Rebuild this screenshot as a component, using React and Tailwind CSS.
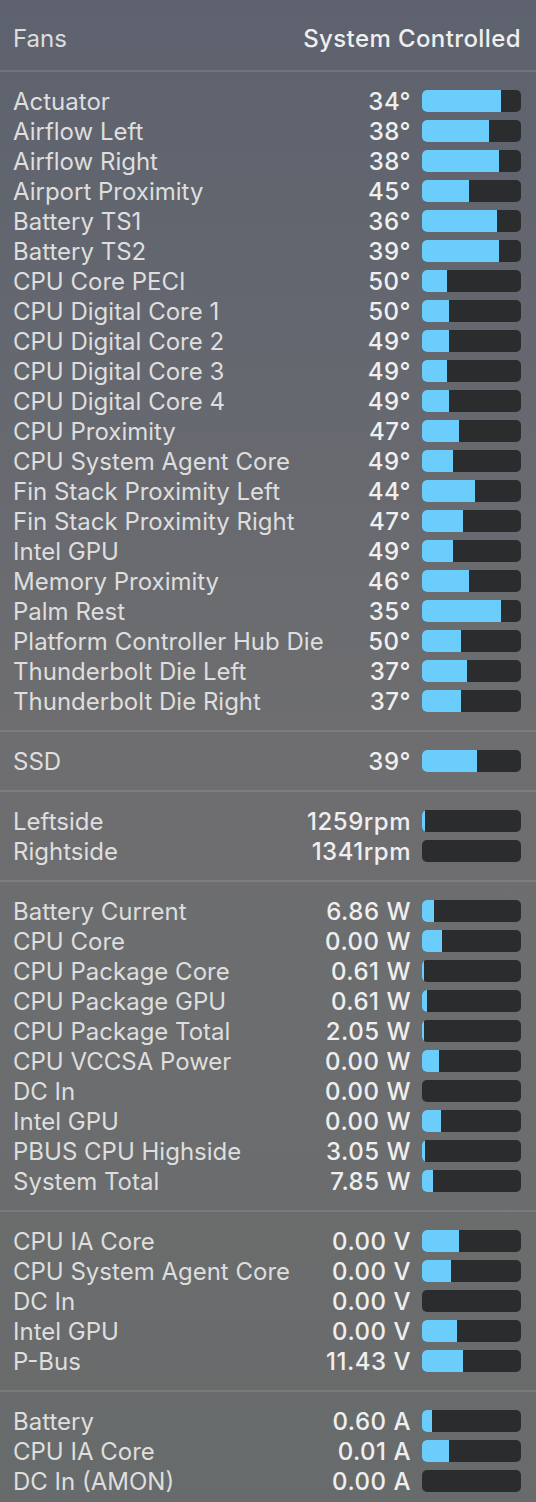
import React from "react";

// sensor readings: [label, value, fill px out of 99]
const temps = [
  ["Actuator", "34°", 79],
  ["Airflow Left", "38°", 67],
  ["Airflow Right", "38°", 77],
  ["Airport Proximity", "45°", 47],
  ["Battery TS1", "36°", 75],
  ["Battery TS2", "39°", 77],
  ["CPU Core PECI", "50°", 25],
  ["CPU Digital Core 1", "50°", 27],
  ["CPU Digital Core 2", "49°", 27],
  ["CPU Digital Core 3", "49°", 25],
  ["CPU Digital Core 4", "49°", 27],
  ["CPU Proximity", "47°", 37],
  ["CPU System Agent Core", "49°", 31],
  ["Fin Stack Proximity Left", "44°", 53],
  ["Fin Stack Proximity Right", "47°", 41],
  ["Intel GPU", "49°", 31],
  ["Memory Proximity", "46°", 47],
  ["Palm Rest", "35°", 79],
  ["Platform Controller Hub Die", "50°", 39],
  ["Thunderbolt Die Left", "37°", 45],
  ["Thunderbolt Die Right", "37°", 39],
];

const disks = [["SSD", "39°", 55]];

const fans = [
  ["Leftside", "1259rpm", 3],
  ["Rightside", "1341rpm", 0],
];

const power = [
  ["Battery Current", "6.86 W", 12],
  ["CPU Core", "0.00 W", 20],
  ["CPU Package Core", "0.61 W", 2],
  ["CPU Package GPU", "0.61 W", 5],
  ["CPU Package Total", "2.05 W", 2],
  ["CPU VCCSA Power", "0.00 W", 17],
  ["DC In", "0.00 W", 0],
  ["Intel GPU", "0.00 W", 19],
  ["PBUS CPU Highside", "3.05 W", 3],
  ["System Total", "7.85 W", 11],
];

const voltage = [
  ["CPU IA Core", "0.00 V", 37],
  ["CPU System Agent Core", "0.00 V", 29],
  ["DC In", "0.00 V", 0],
  ["Intel GPU", "0.00 V", 35],
  ["P-Bus", "11.43 V", 41],
];

const current = [
  ["Battery", "0.60 A", 10],
  ["CPU IA Core", "0.01 A", 27],
  ["DC In (AMON)", "0.00 A", 0],
];

function Bar({ fill }) {
  return (
    <div className="w-[99px] h-[22px] shrink-0 rounded-[5px] bg-[#2b2c2e] overflow-hidden flex">
      {fill > 0 && (
        <div className="h-full bg-[#6acdfb]" style={{ width: fill }} />
      )}
    </div>
  );
}

function Row({ label, value, fill }) {
  return (
    <div className="h-[30px] flex items-center pl-[13px] pr-[15px]">
      <span className="flex-1 whitespace-nowrap text-[#dedede] translate-y-[1px]">
        {label}
      </span>
      <span className="text-[#efefef] font-medium tracking-[0.5px] mr-[11px] whitespace-nowrap translate-y-[1px]">
        {value}
      </span>
      <Bar fill={fill} />
    </div>
  );
}

function Divider() {
  return <div className="h-[2px] bg-white/10" />;
}

function Section({ rows, last }) {
  return (
    <>
      <div className={last ? "pt-[14px] pb-[6px]" : "py-[14px]"}>
        {rows.map(([l, v, f]) => (
          <Row key={l + v} label={l} value={v} fill={f} />
        ))}
      </div>
      {!last && <Divider />}
    </>
  );
}

export default function App() {
  return (
    <div
      className="w-[536px] min-h-[1502px] text-[24px] leading-none bg-gradient-to-b from-[#5d626e] via-[#6e6e70] to-[#686b6b]"
      style={{ fontFamily: "Inter, 'Open Sans', sans-serif" }}
    >
      <div className="h-[70px] flex items-center justify-between pl-[13px] pr-[15px] pt-[7px]">
        <span className="text-[#dedede]">Fans</span>
        <span className="text-[#efefef] font-medium tracking-[0.4px]">
          System Controlled
        </span>
      </div>
      <Divider />
      <Section rows={temps} />
      <Section rows={disks} />
      <Section rows={fans} />
      <Section rows={power} />
      <Section rows={voltage} />
      <Section rows={current} last />
    </div>
  );
}
